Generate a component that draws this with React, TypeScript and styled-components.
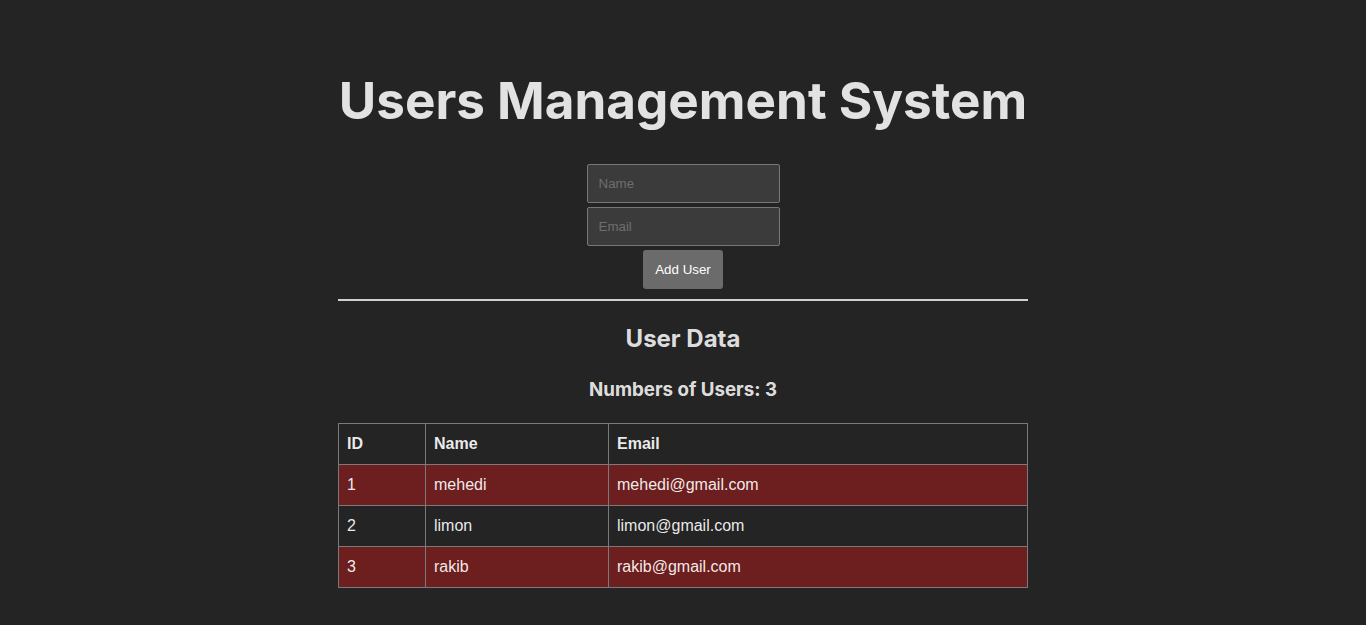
import React from "react";
import styled, { createGlobalStyle } from "styled-components";

const Global = createGlobalStyle`
  html, body { margin: 0; padding: 0; }
  body {
    background: #242424;
    color: rgba(255, 255, 255, 0.87);
    font-family: Inter, "Liberation Sans", sans-serif;
  }
`;

const Page = styled.div`
  display: flex;
  justify-content: center;
  padding-top: 72px;
`;

const Container = styled.div`
  width: 690px;
  display: flex;
  flex-direction: column;
  align-items: stretch;
  text-align: center;
`;

const Title = styled.h1`
  margin: 0 0 34px;
  font-family: Inter, sans-serif;
  font-size: 51.2px;
  line-height: 56px;
  font-weight: 700;
  color: rgba(255, 255, 255, 0.87);
  white-space: nowrap;
`;

const Form = styled.form`
  display: flex;
  flex-direction: column;
  align-items: center;
  gap: 4px;
  margin-top: 2px;
`;

const Input = styled.input`
  box-sizing: border-box;
  width: 193px;
  height: 39px;
  padding: 0 11px;
  background: #3b3b3b;
  border: 1px solid #777;
  border-radius: 2px;
  color: rgba(255, 255, 255, 0.87);
  font-family: "Liberation Sans", Arial, sans-serif;
  font-size: 13.33px;
  outline: none;
  &::placeholder { color: #6e6e6e; }
`;

const Button = styled.button`
  box-sizing: border-box;
  width: 80px;
  height: 39px;
  background: #6b6b6b;
  border: none;
  border-radius: 3px;
  color: #fff;
  font-family: "Liberation Sans", Arial, sans-serif;
  font-size: 13.33px;
  font-weight: 500;
  cursor: pointer;
`;

const Rule = styled.hr`
  width: 100%;
  margin: 10px 0 0;
  border: none;
  border-top: 2px solid #d0d0d0;
`;

const SubTitle = styled.h2`
  margin: 24px 0 0;
  font-family: Inter, sans-serif;
  font-size: 24px;
  line-height: 28px;
  font-weight: 700;
`;

const Count = styled.h3`
  margin: 25px 0 0;
  font-family: Inter, sans-serif;
  font-size: 18.72px;
  line-height: 24px;
  font-weight: 700;
`;

const Table = styled.table`
  margin-top: 21px;
  width: 100%;
  border-collapse: collapse;
  text-align: left;
  font-family: "Liberation Sans", Arial, sans-serif;
  font-size: 16px;
  line-height: 24px;
  color: rgba(255, 255, 255, 0.92);
`;

const Row = styled.tr<{ $red?: boolean }>`
  background: ${(p) => (p.$red ? "#6d1f1f" : "transparent")};
`;

const Th = styled.th<{ $w?: number }>`
  border: 1px solid #7a7a7a;
  padding: 8px;
  font-weight: 700;
  width: ${(p) => (p.$w ? `${p.$w}px` : "auto")};
`;

const Td = styled.td`
  border: 1px solid #7a7a7a;
  padding: 8px;
`;

const users = [
  { id: 1, name: "mehedi", email: "mehedi@gmail.com" },
  { id: 2, name: "limon", email: "limon@gmail.com" },
  { id: 3, name: "rakib", email: "rakib@gmail.com" },
];

export default function App() {
  return (
    <>
      <Global />
      <Page>
        <Container>
          <Title>Users Management System</Title>
          <Form onSubmit={(e) => e.preventDefault()}>
            <Input type="text" placeholder="Name" />
            <Input type="email" placeholder="Email" />
            <Button type="submit">Add User</Button>
          </Form>
          <Rule />
          <SubTitle>User Data</SubTitle>
          <Count>Numbers of Users: {users.length}</Count>
          <Table>
            <thead>
              <tr>
                <Th $w={70}>ID</Th>
                <Th $w={166}>Name</Th>
                <Th>Email</Th>
              </tr>
            </thead>
            <tbody>
              {users.map((u, i) => (
                <Row key={u.id} $red={i % 2 === 0}>
                  <Td>{u.id}</Td>
                  <Td>{u.name}</Td>
                  <Td>{u.email}</Td>
                </Row>
              ))}
            </tbody>
          </Table>
        </Container>
      </Page>
    </>
  );
}
